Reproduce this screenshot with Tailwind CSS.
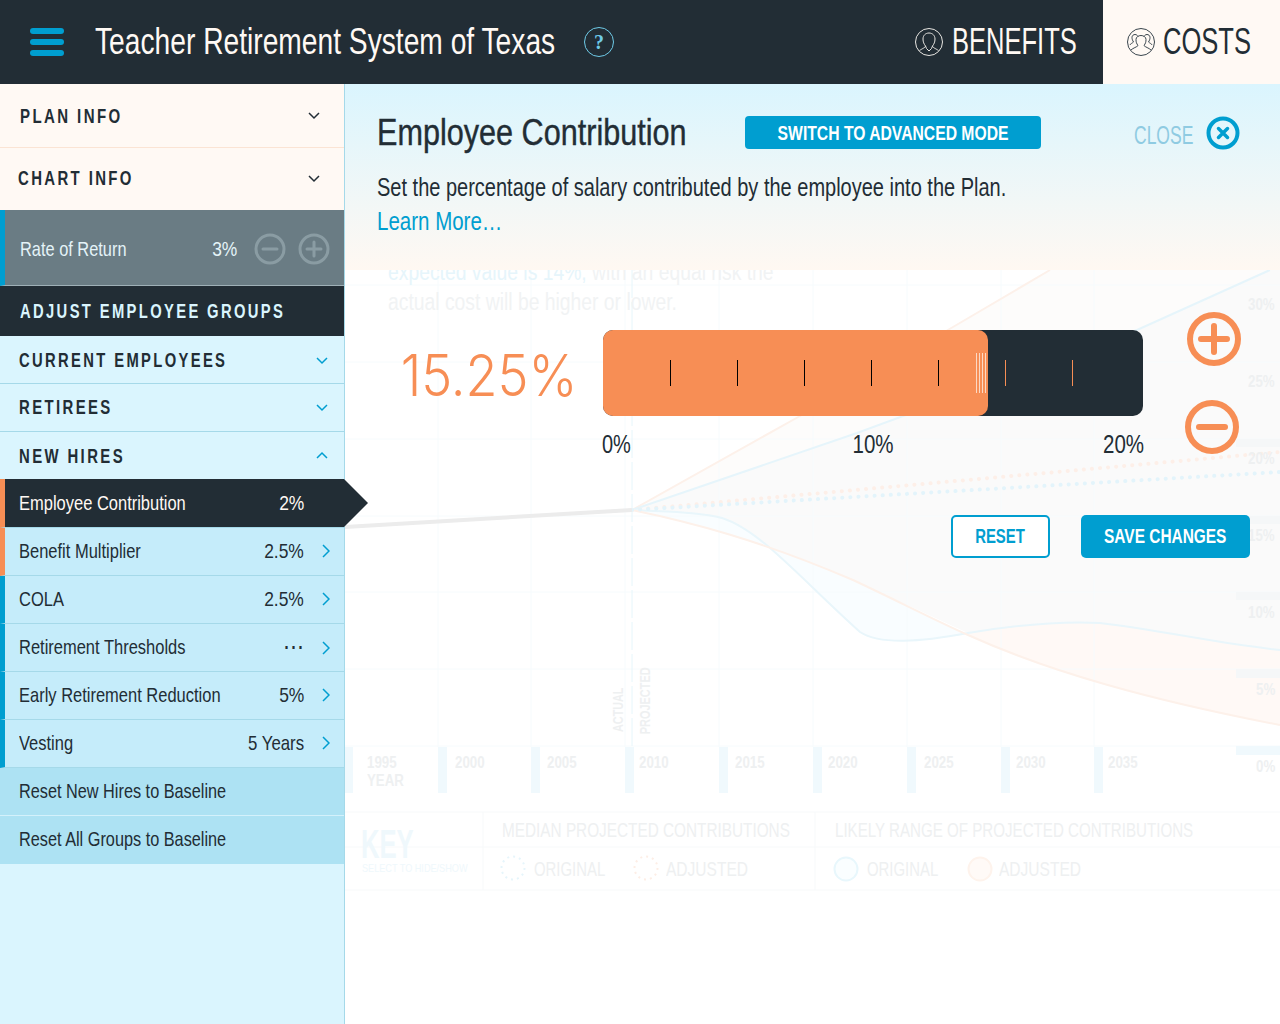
<!DOCTYPE html>
<html lang="en">
<head>
    <meta charset="UTF-8">
    <meta name="viewport" content="width=device-width, initial-scale=1.0">
    <title>Teacher Retirement System of Texas</title>
    <script src="https://cdn.jsdelivr.net/npm/@tailwindcss/browser@4"></script>
</head>
<body class="bg-white font-['Liberation_Sans',sans-serif] text-[#222d35]">
<div class="w-[1280px] h-[1024px] overflow-hidden flex flex-col">

    <!-- Header -->
    <header class="h-[84px] shrink-0 bg-[#222d35] flex items-center">
        <div class="ml-[30px] w-[34px] flex flex-col gap-[5px]">
            <span class="h-[6px] rounded-full bg-[#009ed0]"></span>
            <span class="h-[6px] rounded-full bg-[#009ed0]"></span>
            <span class="h-[6px] rounded-full bg-[#009ed0]"></span>
        </div>
        <h1 class="ml-[31px] pb-[2px] w-[460px] text-[37px] leading-none text-[#fff9f4] whitespace-nowrap origin-left scale-x-[.762]">Teacher Retirement System of Texas</h1>
        <span class="ml-[29px] w-[30px] h-[30px] rounded-full border border-[#6fcbe8] text-[#6fcbe8] flex items-center justify-center text-[20px] font-bold font-['Liberation_Serif',serif]">?</span>
        <div class="ml-auto flex items-center h-full text-[#fff9f4] pr-[26px]">
            <svg class="shrink-0" width="30" height="30" viewBox="0 0 30 30" fill="none" stroke="#e8e6e2" stroke-width="1">
                <circle cx="15" cy="15" r="13.5"/>
                <path d="M11.5 19c-1.500-2-2.500-4-2.500-7 0-3.500 2.500-6 6-6s6 2.500 6 6c0 3-1 5-2.500 7 0 1.500 3 2.500 6 4.500M11.500 19c0 1.500-3 2.500-6 4.500M11.500 19l1 2.500 2.500 2.500 2.500-2.500 1-2.500"/>
            </svg>
            <span class="ml-[8px] pb-[2px] w-[125px] text-[37px] leading-none whitespace-nowrap origin-left scale-x-[.69]">BENEFITS</span>
        </div>
        <div class="w-[177px] h-full shrink-0 bg-[#fff9f4] flex items-center pl-[23px] text-[#222d35]">
            <svg class="shrink-0" width="30" height="30" viewBox="0 0 30 30" fill="none" stroke="#3a464e" stroke-width="1">
                <circle cx="15" cy="15" r="13.5"/>
                <path d="M4 18c0-1 2.500-2 3.500-3-1-1.500-1.500-3-1.500-4.500 0-2 1.500-3 3-3s2.500 1 3 2M26 18c0-1-2.500-2-3.500-3 1-1.500 1.500-3 1.500-4.500 0-2-1.500-3-3-3s-2.500 1-3 2"/>
                <path d="M5 23c2-2 6-3 7-4.500-1.500-2-2-3.500-2-6 0-2.500 2.500-4 5-4s5 1.500 5 4c0 2.500-.5 4-2 6 1 1.500 5 2.500 7 4.500"/>
            </svg>
            <span class="ml-[7px] pb-[2px] w-[90px] text-[37px] leading-none whitespace-nowrap origin-left scale-x-[.69]">COSTS</span>
        </div>
    </header>

    <div class="flex-1 flex min-h-0">
        <!-- Sidebar -->
        <aside class="w-[345px] shrink-0 bg-[#daf5fe] border-r border-[#a5d9e9] flex flex-col relative z-20">
            <div class="h-[64px] bg-[#fff9f4] border-b border-[#fbe4d4] pl-[20px] pr-[24px] flex items-center justify-between">
                <span class="w-0 flex-1 whitespace-nowrap origin-left scale-x-[.715] text-[21px] font-bold tracking-[0.16em]">PLAN INFO</span>
                <svg width="12" height="8" viewBox="0 0 12 8" fill="none" stroke="#222d35" stroke-width="1.5"><path d="M1 1l5 5 5-5"/></svg>
            </div>
            <div class="h-[62px] bg-[#fff9f4] pl-[18px] pr-[24px] flex items-center justify-between">
                <span class="pb-[2px] w-0 flex-1 whitespace-nowrap origin-left scale-x-[.71] text-[21px] font-bold tracking-[0.16em]">CHART INFO</span>
                <svg width="12" height="8" viewBox="0 0 12 8" fill="none" stroke="#222d35" stroke-width="1.5"><path d="M1 1l5 5 5-5"/></svg>
            </div>
            <div class="h-[76px] bg-[#6a7c84] border-l-[5px] border-l-[#009ed0] border-b border-b-[#9fb0b7] pl-[15px] flex items-center text-[#e4f3f8]">
                <span class="pt-[2px] w-0 flex-1 whitespace-nowrap origin-left scale-x-[.78] text-[21px]">Rate of Return</span>
                <span class="pt-[2px] text-[21px] origin-right scale-x-[.83]">3%</span>
                <svg class="ml-[17px] mt-[2px] shrink-0" width="32" height="32" viewBox="0 0 32 32" fill="none" stroke="#8a9ca3" stroke-width="3"><circle cx="16" cy="16" r="14"/><path d="M9 16h14" stroke-linecap="round"/></svg>
                <svg class="ml-[12px] mr-[14px] mt-[2px] shrink-0" width="32" height="32" viewBox="0 0 32 32" fill="none" stroke="#8a9ca3" stroke-width="3"><circle cx="16" cy="16" r="14"/><path d="M9 16h14M16 9v14" stroke-linecap="round"/></svg>
            </div>
            <div class="h-[50px] bg-[#222d35] text-[#daf5fe] pl-[20px] flex items-center">
                <span class="w-0 flex-1 whitespace-nowrap origin-left scale-x-[.703] text-[21px] font-bold tracking-[0.16em]">ADJUST EMPLOYEE GROUPS</span>
            </div>
            <div class="h-[48px] border-b border-[#a5d9e9] pl-[19px] pr-[16px] flex items-center justify-between">
                <span class="w-0 flex-1 whitespace-nowrap origin-left scale-x-[.703] text-[21px] font-bold tracking-[0.16em]">CURRENT EMPLOYEES</span>
                <svg class="mt-[2px]" width="12" height="8" viewBox="0 0 12 8" fill="none" stroke="#009ed0" stroke-width="1.5"><path d="M1 1l5 5 5-5"/></svg>
            </div>
            <div class="h-[48px] border-b border-[#a5d9e9] pl-[19px] pr-[16px] flex items-center justify-between">
                <span class="pb-[2px] w-0 flex-1 whitespace-nowrap origin-left scale-x-[.71] text-[21px] font-bold tracking-[0.16em]">RETIREES</span>
                <svg width="12" height="8" viewBox="0 0 12 8" fill="none" stroke="#009ed0" stroke-width="1.5"><path d="M1 1l5 5 5-5"/></svg>
            </div>
            <div class="h-[47px] pl-[19px] pr-[16px] flex items-center justify-between">
                <span class="w-0 flex-1 whitespace-nowrap origin-left scale-x-[.71] text-[21px] font-bold tracking-[0.16em]">NEW HIRES</span>
                <svg class="mb-[2px]" width="12" height="8" viewBox="0 0 12 8" fill="none" stroke="#009ed0" stroke-width="1.5"><path d="M1 7l5-5 5 5"/></svg>
            </div>
            <!-- Selected row, arrow sticks out over the chart -->
            <div class="h-[49px] relative bg-[#222d35] border-l-[5px] border-l-[#f78e55] border-b border-b-[#a5d9e9] pl-[14px] pr-[40px] flex items-center text-[#fff9f4] text-[21px]">
                <span class="w-0 flex-1 whitespace-nowrap origin-left scale-x-[.785]">Employee Contribution</span>
                <span class="origin-right scale-x-[.83]">2%</span>
                <span class="absolute left-[339px] top-0 w-0 h-0 border-y-[24px] border-y-transparent border-l-[24px] border-l-[#222d35]"></span>
            </div>
            <div class="h-[48px] pb-[2px] bg-[#c5ecfa] border-l-[5px] border-l-[#f78e55] border-b border-b-[#a5d9e9] pl-[14px] pr-[14px] flex items-center text-[21px]">
                <span class="w-0 flex-1 whitespace-nowrap origin-left scale-x-[.785]">Benefit Multiplier</span>
                <span class="origin-right scale-x-[.83]">2.5%</span>
                <svg class="ml-[18px] shrink-0" width="8" height="14" viewBox="0 0 8 14" fill="none" stroke="#009ed0" stroke-width="1.5"><path d="M1 1l6 6-6 6"/></svg>
            </div>
            <div class="h-[48px] pb-[2px] bg-[#c5ecfa] border-l-[5px] border-l-[#009ed0] border-b border-b-[#a5d9e9] pl-[14px] pr-[14px] flex items-center text-[21px]">
                <span class="w-0 flex-1 whitespace-nowrap origin-left scale-x-[.785]">COLA</span>
                <span class="origin-right scale-x-[.83]">2.5%</span>
                <svg class="ml-[18px] shrink-0" width="8" height="14" viewBox="0 0 8 14" fill="none" stroke="#009ed0" stroke-width="1.5"><path d="M1 1l6 6-6 6"/></svg>
            </div>
            <div class="h-[48px] pb-[2px] bg-[#c5ecfa] border-l-[5px] border-l-[#009ed0] border-b border-b-[#a5d9e9] pl-[14px] pr-[14px] flex items-center text-[21px]">
                <span class="w-0 flex-1 whitespace-nowrap origin-left scale-x-[.785]">Retirement Thresholds</span>
                <span>&#8943;</span>
                <svg class="ml-[18px] mt-[2px] shrink-0" width="8" height="14" viewBox="0 0 8 14" fill="none" stroke="#009ed0" stroke-width="1.5"><path d="M1 1l6 6-6 6"/></svg>
            </div>
            <div class="h-[48px] pb-[2px] bg-[#c5ecfa] border-l-[5px] border-l-[#009ed0] border-b border-b-[#a5d9e9] pl-[14px] pr-[14px] flex items-center text-[21px]">
                <span class="w-0 flex-1 whitespace-nowrap origin-left scale-x-[.785]">Early Retirement Reduction</span>
                <span class="origin-right scale-x-[.83]">5%</span>
                <svg class="ml-[18px] shrink-0" width="8" height="14" viewBox="0 0 8 14" fill="none" stroke="#009ed0" stroke-width="1.5"><path d="M1 1l6 6-6 6"/></svg>
            </div>
            <div class="h-[48px] pb-[2px] bg-[#c5ecfa] border-l-[5px] border-l-[#009ed0] border-b border-b-[#a5d9e9] pl-[14px] pr-[14px] flex items-center text-[21px]">
                <span class="w-0 flex-1 whitespace-nowrap origin-left scale-x-[.785]">Vesting</span>
                <span class="origin-right scale-x-[.8]">5 Years</span>
                <svg class="ml-[18px] shrink-0" width="8" height="14" viewBox="0 0 8 14" fill="none" stroke="#009ed0" stroke-width="1.5"><path d="M1 1l6 6-6 6"/></svg>
            </div>
            <div class="h-[48px] pb-[2px] bg-[#ade2f3] border-b border-[#d4f1fb] pl-[19px] flex items-center text-[21px]">
                <span class="whitespace-nowrap origin-left scale-x-[.775]">Reset New Hires to Baseline</span>
            </div>
            <div class="h-[48px] pb-[2px] bg-[#ade2f3] pl-[19px] flex items-center text-[21px]">
                <span class="whitespace-nowrap origin-left scale-x-[.775]">Reset All Groups to Baseline</span>
            </div>
        </aside>

        <!-- Main -->
        <main class="flex-1 relative min-w-0">
            <!-- Faded chart behind the editor -->
            <div class="absolute inset-0 z-0 text-[#eef0f1] font-bold">
                <svg class="absolute left-0 top-0" width="935" height="940" viewBox="345 84 935 940" fill="none">
                    <path d="M632 510L857 433 1137 330 1270 270H1280V650C1220 644 1160 630 1100 623 1060 621 1010 626 968 633L853 580C760 540 690 522 632 510Z" fill="#fafafa"/>
                    <path d="M632 510L800 416 953 327 1050 270H1270L1137 330 857 433Z" fill="#fdfcfb"/>
                    <path d="M968 633C1010 626 1060 621 1100 623 1160 630 1220 644 1280 650V725C1150 700 1050 672 968 635Z" fill="#fff9f6"/>
                    <path d="M632 510C690 522 760 540 853 580 900 602 930 618 968 634 920 642 880 645 860 632 800 578 760 530 722 518 700 512 670 512 632 510Z" fill="#f9fdff"/>
                    <g stroke="#f6fbfd" stroke-width="1">
                        <path d="M345 285H1280M345 362H1280M345 439H1280M345 516H1280M345 592H1280M345 669H1280M345 746H1280"/>
                        <path d="M438 270V747M531 270V747M625 270V747M719 270V747M813 270V747M907 270V747M1001 270V747M1094 270V747"/>
                    </g>
                    <path d="M632 270V747" stroke="#e6f6fb" stroke-dasharray="28 4"/>
                    <path d="M632 510L800 416 953 327 1050 270" stroke="#fdf1ea" stroke-width="2"/>
                    <path d="M632 510L857 433 1137 330 1270 270" stroke="#e6f5fb" stroke-width="2"/>
                    <path d="M632 510C670 512 700 512 722 518 760 530 800 578 860 632 880 645 920 642 968 633 1010 626 1060 621 1100 623 1160 630 1220 644 1280 650" stroke="#e9f6fb" stroke-width="2"/>
                    <path d="M632 510C690 522 760 540 853 580 900 602 930 618 968 635 1050 672 1150 700 1280 725" stroke="#fdf1ea" stroke-width="2"/>
                    <path d="M632 510L1280 452" stroke="#fdefe8" stroke-width="4" stroke-linecap="round" stroke-dasharray="0.1 8"/>
                    <path d="M632 510L1280 472" stroke="#e3f4fb" stroke-width="4" stroke-linecap="round" stroke-dasharray="0.1 8"/>
                    <path d="M345 527L632 510" stroke="#ececec" stroke-width="4"/>
                    <g fill="#f0f9fd">
                        <rect x="345" y="747" width="8" height="46"/><rect x="438" y="747" width="9" height="46"/><rect x="531" y="747" width="9" height="46"/><rect x="625" y="747" width="9" height="46"/><rect x="719" y="747" width="9" height="46"/><rect x="813" y="747" width="9" height="46"/><rect x="907" y="747" width="9" height="46"/><rect x="1001" y="747" width="9" height="46"/><rect x="1094" y="747" width="9" height="46"/>
                        <rect x="1236" y="746" width="44" height="9"/>
                    </g>
                    <g fill="#f5f7f8">
                        <rect x="1236" y="669" width="44" height="9"/><rect x="1236" y="592" width="44" height="8"/><rect x="1236" y="516" width="44" height="8"/><rect x="1236" y="439" width="44" height="8"/>
                    </g>
                    <path d="M345 812H1280M345 847H1280M345 890H1280M483 812V890M815 812V890" stroke="#f7f9fa"/>
                    <circle cx="513" cy="868" r="11.5" stroke="#e6f5fb" stroke-width="2" stroke-dasharray="2 4"/>
                    <circle cx="646" cy="868" r="11.5" stroke="#fdeee6" stroke-width="2" stroke-dasharray="2 4"/>
                    <circle cx="846" cy="869" r="11.5" fill="#fafeff" stroke="#e8f7fc" stroke-width="2"/>
                    <circle cx="980" cy="869" r="11.5" fill="#fffaf7" stroke="#fef3ec" stroke-width="2"/>
                </svg>

                <div class="absolute left-[43px] top-[173px] text-[23px] font-normal leading-[30px] whitespace-nowrap text-[#f1f3f4] origin-left scale-x-[.84]">
                    <p class="text-[#e6f5fb]">expected value is 14%, <span class="text-[#f1f3f4]">with an equal risk the</span></p>
                    <p>actual cost will be higher or lower.</p>
                </div>

                <span class="absolute left-[903px] top-[209px] text-[16px] origin-left scale-x-[.83]">30%</span>
                <span class="absolute left-[903px] top-[286px] text-[16px] origin-left scale-x-[.83]">25%</span>
                <span class="absolute left-[903px] top-[363px] text-[16px] origin-left scale-x-[.83]">20%</span>
                <span class="absolute left-[903px] top-[440px] text-[16px] origin-left scale-x-[.83]">15%</span>
                <span class="absolute left-[903px] top-[517px] text-[16px] origin-left scale-x-[.83]">10%</span>
                <span class="absolute left-[911px] top-[594px] text-[16px] origin-left scale-x-[.83]">5%</span>
                <span class="absolute left-[911px] top-[671px] text-[16px] origin-left scale-x-[.83]">0%</span>

                <span class="absolute left-[22px] top-[670px] text-[16px] leading-[18px] origin-left scale-x-[.83]">1995<br>YEAR</span>
                <span class="absolute left-[110px] top-[670px] text-[16px] leading-[18px] origin-left scale-x-[.83]">2000</span>
                <span class="absolute left-[202px] top-[670px] text-[16px] leading-[18px] origin-left scale-x-[.83]">2005</span>
                <span class="absolute left-[294px] top-[670px] text-[16px] leading-[18px] origin-left scale-x-[.83]">2010</span>
                <span class="absolute left-[390px] top-[670px] text-[16px] leading-[18px] origin-left scale-x-[.83]">2015</span>
                <span class="absolute left-[483px] top-[670px] text-[16px] leading-[18px] origin-left scale-x-[.83]">2020</span>
                <span class="absolute left-[579px] top-[670px] text-[16px] leading-[18px] origin-left scale-x-[.83]">2025</span>
                <span class="absolute left-[671px] top-[670px] text-[16px] leading-[18px] origin-left scale-x-[.83]">2030</span>
                <span class="absolute left-[763px] top-[670px] text-[16px] leading-[18px] origin-left scale-x-[.83]">2035</span>

                <span class="absolute left-[266px] top-[597px] [writing-mode:vertical-rl] rotate-180 scale-y-[.77] text-[14px] leading-none">ACTUAL</span>
                <span class="absolute left-[293px] top-[574px] [writing-mode:vertical-rl] rotate-180 scale-y-[.78] text-[14px] leading-none">PROJECTED</span>

                <span class="absolute left-[16px] top-[744px] text-[40px] leading-[32px] text-[#eff8fc] font-bold origin-left scale-x-[.64]">KEY</span>
                <span class="absolute left-[17px] top-[776px] text-[11px] text-[#eff8fc] font-normal whitespace-nowrap origin-left scale-x-[.83]">SELECT TO HIDE/SHOW</span>
                <span class="absolute left-[157px] top-[730px] text-[21px] font-normal whitespace-nowrap origin-left scale-x-[.73]">MEDIAN PROJECTED CONTRIBUTIONS</span>
                <span class="absolute left-[490px] top-[730px] text-[21px] font-normal whitespace-nowrap origin-left scale-x-[.72]">LIKELY RANGE OF PROJECTED CONTRIBUTIONS</span>
                <span class="absolute left-[189px] top-[769px] text-[21px] font-normal origin-left scale-x-[.71]">ORIGINAL</span>
                <span class="absolute left-[321px] top-[769px] text-[21px] font-normal origin-left scale-x-[.74]">ADJUSTED</span>
                <span class="absolute left-[522px] top-[769px] text-[21px] font-normal origin-left scale-x-[.71]">ORIGINAL</span>
                <span class="absolute left-[654px] top-[769px] text-[21px] font-normal origin-left scale-x-[.74]">ADJUSTED</span>
            </div>

            <!-- Editor -->
            <div class="relative z-10">
                <div class="h-[186px] bg-gradient-to-b from-[#daf5fe] to-[#fff8f2] pl-[32px] pt-[30px]">
                    <div class="h-[37px] flex items-center">
                        <h2 class="w-[368px] text-[36px] leading-[36px] whitespace-nowrap origin-left scale-x-[.85] [-webkit-text-stroke:0.4px_#222d35]">Employee Contribution</h2>
                        <button class="w-[296px] h-[33px] rounded-[4px] bg-[#009ed0] text-white text-[20px] font-bold flex items-center justify-center">
                            <span class="whitespace-nowrap scale-x-[.785]">SWITCH TO ADVANCED MODE</span>
                        </button>
                        <span class="ml-[93px] pt-[4px] w-[72px] text-[25px] leading-[30px] text-[#8fcbe2] origin-left scale-x-[.7]">CLOSE</span>
                        <svg class="shrink-0" width="34" height="34" viewBox="0 0 34 34" fill="none" stroke="#009ed0"><circle cx="17" cy="17" r="14.5" stroke-width="4"/><path d="M12.500 12.500l9 9M21.500 12.500l-9 9" stroke-width="3.500" stroke-linecap="round"/></svg>
                    </div>
                    <p class="mt-[19px] text-[25px] leading-[34px] whitespace-nowrap origin-left scale-x-[.80]">Set the percentage of salary contributed by the employee into the Plan.</p>
                    <a class="block text-[25px] leading-[34px] text-[#009ed0] origin-left scale-x-[.82]">Learn More&#8230;</a>
                </div>

                <div class="flex pt-[60px] h-[245px]">
                    <div class="w-[258px] pt-[9px] pr-[26px] text-right text-[#f78e55] text-[58px] leading-[72px] font-['Inter',sans-serif] font-light whitespace-nowrap">
                        <span class="inline-block origin-right scale-x-[.9]">15.25%</span>
                    </div>
                    <div class="w-[540px]">
                        <div class="relative h-[86px] rounded-[10px] bg-[#222d35] overflow-hidden flex items-center">
                            <div class="absolute left-0 top-0 bottom-0 w-[385px] bg-[#f78e55] rounded-r-[10px]"></div>
                            <!-- ticks -->
                            <div class="relative flex items-center ml-[67px] gap-[66px]">
                                <span class="w-px h-[26px] bg-black"></span>
                                <span class="w-px h-[26px] bg-black"></span>
                                <span class="w-px h-[26px] bg-black"></span>
                                <span class="w-px h-[26px] bg-black"></span>
                                <span class="w-px h-[26px] bg-black"></span>
                                <span class="w-px h-[26px] bg-[#f78e55]"></span>
                                <span class="w-px h-[26px] bg-[#f78e55]"></span>
                            </div>
                            <div class="absolute left-[373px] top-[23px] h-[40px] flex gap-[2px]">
                                <span class="w-px bg-[#fcd9c4]"></span>
                                <span class="w-px bg-[#fcd9c4]"></span>
                                <span class="w-px bg-[#fcd9c4]"></span>
                                <span class="w-px bg-[#fcd9c4]"></span>
                            </div>
                        </div>
                        <div class="mt-[13px] flex justify-between text-[25px] leading-[30px]">
                            <span class="-translate-x-px origin-left scale-x-[.8]">0%</span>
                            <span class="translate-x-[7px] scale-x-[.82]">10%</span>
                            <span class="translate-x-px origin-right scale-x-[.82]">20%</span>
                        </div>
                    </div>
                    <div class="ml-[42px] -mt-[20px] flex flex-col">
                        <svg class="shrink-0" width="58" height="58" viewBox="0 0 58 58" fill="none" stroke="#f78e55" stroke-width="6" stroke-linecap="round"><circle cx="29" cy="29" r="24"/><path d="M16 29h26M29 16v26"/></svg>
                        <svg class="shrink-0 -ml-[2px] mt-[30px]" width="58" height="58" viewBox="0 0 58 58" fill="none" stroke="#f78e55" stroke-width="6" stroke-linecap="round"><circle cx="29" cy="29" r="24"/><path d="M16 29h26"/></svg>
                    </div>
                </div>

                <div class="flex justify-end pr-[30px] gap-[31px]">
                    <button class="w-[99px] h-[43px] pb-[2px] rounded-[5px] border-2 border-[#009ed0] bg-white text-[#009ed0] text-[21px] font-bold flex items-center justify-center">
                        <span class="scale-x-[.71]">RESET</span>
                    </button>
                    <button class="w-[169px] h-[43px] pb-[2px] rounded-[5px] bg-[#009ed0] text-white text-[21px] font-bold flex items-center justify-center">
                        <span class="whitespace-nowrap scale-x-[.735]">SAVE CHANGES</span>
                    </button>
                </div>
            </div>
        </main>
    </div>
</div>
</body>
</html>
